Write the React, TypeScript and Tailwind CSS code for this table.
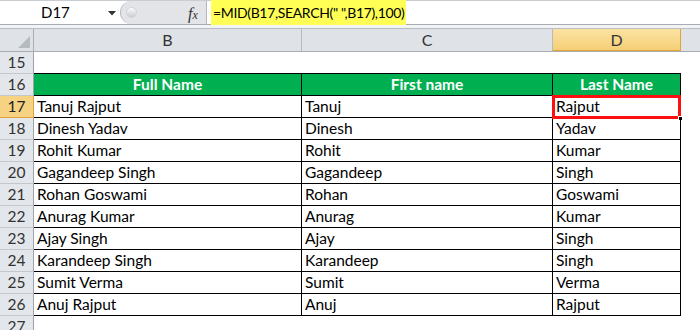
import React from "react";

const font = { fontFamily: "Lato, 'Open Sans', sans-serif" };

const data: [string, string, string][] = [
  ["Tanuj Rajput", "Tanuj", "Rajput"],
  ["Dinesh Yadav", "Dinesh", "Yadav"],
  ["Rohit Kumar", "Rohit", "Kumar"],
  ["Gagandeep Singh", "Gagandeep", "Singh"],
  ["Rohan Goswami", "Rohan", "Goswami"],
  ["Anurag Kumar", "Anurag", "Kumar"],
  ["Ajay Singh", "Ajay", "Singh"],
  ["Karandeep Singh", "Karandeep", "Singh"],
  ["Sumit Verma", "Sumit", "Verma"],
  ["Anuj Rajput", "Anuj", "Rajput"],
];

function RowHead({ n, active }: { n: number; active?: boolean }) {
  return (
    <div
      className={
        "w-[34px] shrink-0 flex items-center justify-center text-[15.5px] border-r border-b " +
        (active
          ? "bg-[#f6d382] text-[#222] border-r-[#e3a23a] border-b-[#e3a23a]"
          : "bg-[#e3e6ea] text-[#333] border-r-[#9ea4ac] border-b-[#c3c8ce]")
      }
    >
      {n}
    </div>
  );
}

export default function App() {
  return (
    <div className="w-[700px] h-[330px] overflow-hidden bg-white text-black" style={font}>
      {/* formula bar */}
      <div className="h-[25px] flex border-t border-b border-t-[#c9ccd1] border-b-[#a9adb3] bg-white">
        <div className="w-[120px] shrink-0 flex items-center relative">
          <span className="ml-[41px] text-[15px] text-black">D17</span>
          <svg className="absolute left-[108px] top-[10px]" width="8" height="5" viewBox="0 0 8 5">
            <path d="M0 0 H8 L4 4.5 Z" fill="#333" />
          </svg>
        </div>
        <div className="w-[86px] shrink-0 bg-[#e2e4e8] rounded-l-[12px] border-l border-[#b5b9bf] flex items-center relative">
          <div className="ml-[5px] w-[11px] h-[11px] rounded-full bg-gradient-to-b from-[#fbfbfc] to-[#c9ccd1] border border-[#d0d3d8]" />
          <span
            className="absolute left-[67px] top-[1px] italic text-[16px] text-[#333]"
            style={{ fontFamily: "'Liberation Serif', serif" }}
          >
            f<span className="text-[12px]">x</span>
          </span>
        </div>
        <div className="w-px bg-[#b3b7bd]" />
        <div className="flex-1 flex items-stretch pl-[4px]">
          <span className="bg-[#ffff55] px-[2px] text-[14px] tracking-[-0.35px] flex items-center -my-[1px] pb-[1px]">
            =MID(B17,SEARCH(" ",B17),100)
          </span>
        </div>
      </div>
      <div className="h-[3px] bg-[#f3f4f6]" />
      {/* column headers */}
      <div className="h-[24px] flex bg-[#dfe2e6] border-t border-b border-t-[#b9bdc3] border-b-[#a9aeb5] text-[16px] text-[#333]">
        <div className="w-[34px] shrink-0 border-r border-[#a9aeb5] relative">
          <svg className="absolute right-[3px] bottom-[3px]" width="12" height="12" viewBox="0 0 12 12">
            <path d="M12 0 V12 H0 Z" fill="#b6bbc2" />
          </svg>
        </div>
        <div className="w-[268px] shrink-0 border-r border-[#b5bac0] flex items-center justify-center">B</div>
        <div className="w-[251px] shrink-0 border-r border-[#b5bac0] flex items-center justify-center">C</div>
        <div className="w-[128px] shrink-0 border-r border-[#e3a23a] bg-gradient-to-b from-[#fbe3a2] to-[#f5cf76] flex items-center justify-center border-b border-b-[#e3a23a]">
          D
        </div>
        <div className="flex-1" />
      </div>
      {/* row 15 */}
      <div className="h-[22px] flex">
        <RowHead n={15} />
        <div className="w-[647px] shrink-0 border-b border-black" />
        <div className="flex-1" />
      </div>
      {/* row 16 header */}
      <div className="h-[22px] flex">
        <RowHead n={16} />
        <div className="w-[268px] shrink-0 bg-[#00b050] border-r border-b border-black text-white font-bold text-[15.5px] flex items-center justify-center">
          Full Name
        </div>
        <div className="w-[251px] shrink-0 bg-[#00b050] border-r border-b border-black text-white font-bold text-[15.5px] flex items-center justify-center">
          First name
        </div>
        <div className="w-[128px] shrink-0 bg-[#00b050] border-r border-b border-black text-white font-bold text-[15.5px] flex items-center justify-center">
          Last Name
        </div>
        <div className="flex-1" />
      </div>
      {data.map((r, i) => (
        <div key={i} className="h-[22px] flex">
          <RowHead n={17 + i} active={i === 0} />
          <div className="w-[268px] shrink-0 border-r border-b border-black text-[15.5px] flex items-center pl-[3px]">
            {r[0]}
          </div>
          <div className="w-[251px] shrink-0 border-r border-b border-black text-[15.5px] flex items-center pl-[3px]">
            {r[1]}
          </div>
          <div className="w-[128px] shrink-0 border-r border-b border-black text-[15.5px] flex items-center pl-[3px] relative">
            {r[2]}
            {i === 0 && (
              <>
                <div className="absolute -left-[1px] -top-[1px] -right-[1px] -bottom-[2px] border-[3px] border-[#ff1010]" />
                <div className="absolute -right-[3px] -bottom-[4px] w-[5px] h-[5px] bg-black border border-white" />
              </>
            )}
          </div>
          <div className="flex-1" />
        </div>
      ))}
      <div className="h-[22px] flex">
        <RowHead n={27} />
        <div className="flex-1" />
      </div>
    </div>
  );
}
